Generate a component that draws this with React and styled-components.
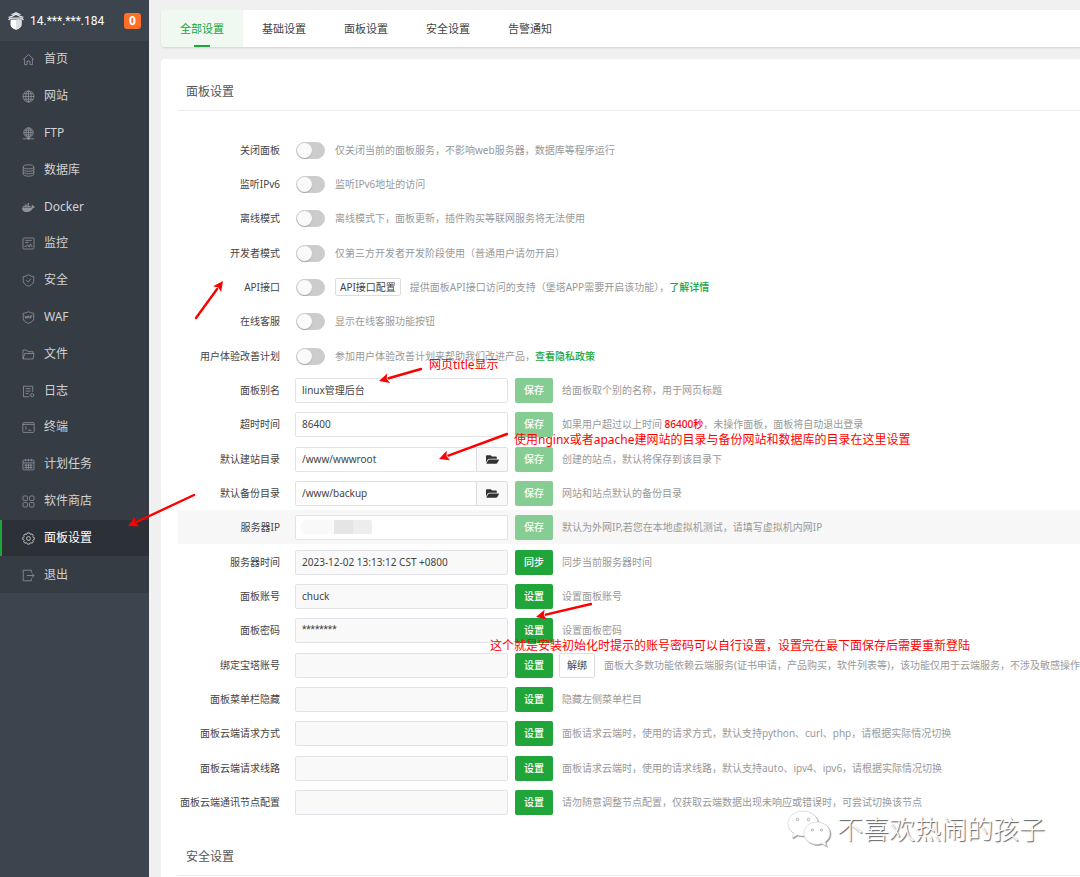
import React, { useState } from "react";
import styled, { createGlobalStyle, css } from "styled-components";
import { FaDocker, FaFolderOpen } from "react-icons/fa";

const ICONS = {
  home: <path d="M1.5 8 8 1.8 14.5 8M3.2 7v7.3h3V10h3.6v4.300h3V7" />,
  site: (
    <>
      <circle cx="8" cy="8" r="6.8" />
      <path d="M8 1.2v13.6M1.2 8h13.6M2.3 4.6h11.4M2.3 11.4h11.4" />
      <ellipse cx="8" cy="8" rx="3.4" ry="6.8" />
    </>
  ),
  ftp: (
    <>
      <circle cx="8" cy="6.8" r="5.8" />
      <path d="M8 1v13M2.2 6.8h11.6M3.2 4h9.6M3.2 9.6h9.6M1 14.5h14" />
      <ellipse cx="8" cy="6.8" rx="2.9" ry="5.8" />
      <circle cx="8" cy="14" r="1.2" fill="currentColor" />
    </>
  ),
  database: (
    <>
      <ellipse cx="8" cy="3.5" rx="6.5" ry="2.5" />
      <path d="M1.5 3.5v9c0 1.4 2.9 2.5 6.500 2.500s6.500-1.100 6.500-2.500v-9M1.500 6.500C1.500 7.900 4.400 9 8 9s6.500-1.100 6.500-2.500M1.500 9.500C1.500 10.900 4.400 12 8 12s6.500-1.100 6.500-2.500" />
    </>
  ),
  monitor: (
    <>
      <rect x="1.2" y="1.2" width="13.6" height="13.6" rx="1" />
      <path d="M4 4.200h8M4 6.800h4M3 11.500h2.500l1.500-2 2 3 1.500-4 1 3H13" />
    </>
  ),
  shield: (
    <>
      <path d="M8 1c2 1.300 4.200 2 6.500 2.200V8c0 3.400-2.600 5.700-6.500 7.200C4.100 13.700 1.500 11.400 1.500 8V3.200C3.800 3 6 2.300 8 1Z" />
      <path d="m5.200 7.800 2.100 2.100 3.600-3.700" />
    </>
  ),
  waf: (
    <>
      <path d="M8 .9c2 1.300 4.200 1.500 6.500 1.800V9c0 3-2.600 4.900-6.500 6.200C4.100 13.900 1.500 12 1.500 9V2.700C3.800 2.400 6 2.200 8 .9Z" />
      <path d="m3.500 5.800.9 3.200.9-2.200.9 2.200.9-3.200M7.300 9l1-3 1 3M10.500 9V5.900H13M10.500 7.400h2" />
    </>
  ),
  folder: (
    <>
      <path d="M1.200 13.500V2.500h4.600l1.500 2h6.200v2.300" />
      <path d="M1.200 13.500 3.300 6.800h11.500l-1.200 6.700H1.200Z" />
    </>
  ),
  log: (
    <>
      <path d="M9 14.500H1.800V1.500h11.400v7M4.500 4.500h6M4.500 7.500h6M4.500 10.500h3.500" />
      <circle cx="12.5" cy="12.5" r="2" />
    </>
  ),
  terminal: (
    <>
      <rect x="1" y="2" width="14" height="12" rx="1" />
      <path d="M1 4.200h14M3.500 6.800l2.300 2-2.300 2M7.500 11.300h4" />
    </>
  ),
  calendar: (
    <>
      <rect x="1.2" y="2.6" width="13.6" height="12" rx="1" />
      <path d="M4.500 1v3M8 1v3M11.500 1v3M1.200 6h13.600M3 8.800h10M3 11.600h10M5 7v6.500M8 7v6.500M11 7v6.500" />
    </>
  ),
  apps: (
    <>
      <rect x="1.2" y="1.2" width="5.6" height="5.6" rx="1.5" />
      <rect x="9.2" y="1.2" width="5.6" height="5.6" rx="1.5" />
      <rect x="1.2" y="9.2" width="5.6" height="5.6" rx="1.5" />
      <rect x="9.2" y="9.2" width="5.6" height="5.6" rx="1.5" />
    </>
  ),
  settings: (
    <>
      <path d="m6.300 2.400.6-1.400h2.200l.6 1.400 1.300.5 1.400-.6 1.500 1.600-.6 1.400.5 1.200 1.400.5v2l-1.400.6-.5 1.300.6 1.400-1.600 1.500-1.300-.6-1.300.5L9.100 15H6.900l-.6-1.300-1.300-.5-1.400.6-1.500-1.600.6-1.300-.5-1.300L.8 9V7l1.400-.5.5-1.200-.6-1.400 1.600-1.600 1.300.6Z" />
      <circle cx="8" cy="8" r="2.4" />
    </>
  ),
  logout: (
    <path d="M11.500 4.500v-3h-10v13h10v-3M6 8h9M12.200 5.300 15 8l-2.800 2.700" />
  )
};

const MENU = [
  { icon: "home", text: "首页" },
  { icon: "site", text: "网站" },
  { icon: "ftp", text: "FTP" },
  { icon: "database", text: "数据库" },
  { icon: "docker", text: "Docker" },
  { icon: "monitor", text: "监控" },
  { icon: "shield", text: "安全" },
  { icon: "waf", text: "WAF" },
  { icon: "folder", text: "文件" },
  { icon: "log", text: "日志" },
  { icon: "terminal", text: "终端" },
  { icon: "calendar", text: "计划任务" },
  { icon: "apps", text: "软件商店" },
  { icon: "settings", text: "面板设置" },
  { icon: "logout", text: "退出" }
];

const TABS = ["全部设置", "基础设置", "面板设置", "安全设置", "告警通知"];

const SWITCHES = [
  {
    id: "closePanel",
    label: "关闭面板",
    hint: "仅关闭当前的面板服务，不影响web服务器，数据库等程序运行"
  },
  { id: "ipv6", label: "监听IPv6", hint: "监听IPv6地址的访问" },
  {
    id: "offline",
    label: "离线模式",
    hint: "离线模式下，面板更新，插件购买等联网服务将无法使用"
  },
  {
    id: "developer",
    label: "开发者模式",
    hint: "仅第三方开发者开发阶段使用（普通用户请勿开启）"
  },
  {
    id: "api",
    label: "API接口",
    button: "API接口配置",
    hint: "提供面板API接口访问的支持（堡塔APP需要开启该功能），",
    link: "了解详情"
  },
  { id: "service", label: "在线客服", hint: "显示在线客服功能按钮" },
  {
    id: "improve",
    label: "用户体验改善计划",
    hint: "参加用户体验改善计划来帮助我们改进产品，",
    link: "查看隐私政策"
  }
];

const FIELDS = [
  {
    id: "alias",
    label: "面板别名",
    value: "linux管理后台",
    action: "保存",
    hint: "给面板取个别的名称，用于网页标题"
  },
  {
    id: "timeout",
    label: "超时时间",
    value: "86400",
    action: "保存",
    hint: "如果用户超过以上时间 ",
    warn: "86400秒",
    hintEnd: "，未操作面板，面板将自动退出登录"
  },
  {
    id: "sitePath",
    label: "默认建站目录",
    value: "/www/wwwroot",
    action: "保存",
    browse: true,
    hint: "创建的站点，默认将保存到该目录下"
  },
  {
    id: "backupPath",
    label: "默认备份目录",
    value: "/www/backup",
    action: "保存",
    browse: true,
    hint: "网站和站点默认的备份目录"
  },
  {
    id: "serverIp",
    label: "服务器IP",
    value: "",
    action: "保存",
    masked: true,
    active: true,
    hint: "默认为外网IP,若您在本地虚拟机测试，请填写虚拟机内网IP"
  },
  {
    id: "serverTime",
    label: "服务器时间",
    value: "2023-12-02 13:13:12 CST +0800",
    action: "同步",
    hint: "同步当前服务器时间"
  },
  {
    id: "account",
    label: "面板账号",
    value: "chuck",
    action: "设置",
    hint: "设置面板账号"
  },
  {
    id: "password",
    label: "面板密码",
    value: "********",
    action: "设置",
    hint: "设置面板密码"
  },
  {
    id: "btAccount",
    label: "绑定宝塔账号",
    value: "",
    action: "设置",
    extra: "解绑",
    hint:
      "面板大多数功能依赖云端服务(证书申请，产品购买，软件列表等)，该功能仅用于云端服务，不涉及敏感操作"
  },
  {
    id: "hideMenu",
    label: "面板菜单栏隐藏",
    value: "",
    action: "设置",
    hint: "隐藏左侧菜单栏目"
  },
  {
    id: "cloudMethod",
    label: "面板云端请求方式",
    value: "",
    action: "设置",
    hint:
      "面板请求云端时，使用的请求方式，默认支持python、curl、php，请根据实际情况切换"
  },
  {
    id: "cloudLine",
    label: "面板云端请求线路",
    value: "",
    action: "设置",
    hint:
      "面板请求云端时，使用的请求线路，默认支持auto、ipv4、ipv6，请根据实际情况切换"
  },
  {
    id: "cloudNode",
    label: "面板云端通讯节点配置",
    value: "",
    action: "设置",
    hint:
      "请勿随意调整节点配置，仅获取云端数据出现未响应或错误时，可尝试切换该节点"
  }
];

const ARROWS = [
  [196, 318, 223, 281],
  [194, 495, 128, 526],
  [421, 369, 379, 381],
  [507, 434, 439, 459],
  [591, 604, 536, 617]
];

const NOTES = [
  { x: 429, y: 357, text: "网页title显示" },
  {
    x: 514,
    y: 432,
    text: "使用nginx或者apache建网站的目录与备份网站和数据库的目录在这里设置"
  },
  {
    x: 490,
    y: 638,
    text:
      "这个就是安装初始化时提示的账号密码可以自行设置，设置完在最下面保存后需要重新登陆"
  }
];

function MenuIcon({ name }) {
  if (name === "docker") return <FaDocker size={13} />;
  return (
    <svg width="13" height="13" viewBox="0 0 16 16" fill="none" stroke="currentColor">
      {ICONS[name]}
    </svg>
  );
}

function Logo() {
  return (
    <svg width="16" height="18" viewBox="0 0 16 18" fill="none">
      <path d="M2.500 7.500h11V13c0 2-2.500 3.800-5.500 4.800C5 16.800 2.500 15 2.500 13Z" fill="#fff" />
      <path d="M8 7.500h5.500V13c0 2-2.500 3.800-5.500 4.800Z" fill="#dcdee0" />
      <path
        d="M.8 8.200c.2-1.600 1.400-2 3.200-2h8c1.800 0 3 .4 3.200 2M.6 5.300C2.800 5 5.800 3.700 8 2.300c2.200 1.400 5.200 2.700 7.400 3M3.500 2.600C5.200 2.400 6.800 1.700 8 .8c1.200.9 2.800 1.600 4.500 1.800"
        stroke="#e6e8ea"
        strokeWidth="1.3"
      />
    </svg>
  );
}

function Arrow({ points: [x1, y1, x2, y2] }) {
  const len = Math.hypot(x2 - x1, y2 - y1);
  const ux = (x2 - x1) / len;
  const uy = (y2 - y1) / len;
  const bx = x2 - ux * 10;
  const by = y2 - uy * 10;
  const corners = [
    [x2, y2],
    [bx - uy * 5, by + ux * 5],
    [x2 - ux * 8, y2 - uy * 8],
    [bx + uy * 5, by - ux * 5]
  ];
  return (
    <g>
      <line x1={x1} y1={y1} x2={bx} y2={by} stroke="#f00" strokeWidth="2.4" strokeLinecap="round" />
      <polygon points={corners.map(c => c.join(",")).join(" ")} fill="#f00" />
    </g>
  );
}

function SwitchRow({ item }) {
  const [on, setOn] = useState(false);
  return (
    <Row>
      <Label htmlFor={item.id}>{item.label}</Label>
      <Switch
        id={item.id}
        type="checkbox"
        checked={on}
        onChange={e => setOn(e.target.checked)}
      />
      {item.button && <SmallButton type="button">{item.button}</SmallButton>}
      <Hint>
        {item.hint}
        {item.link && <HintLink href="#">{item.link}</HintLink>}
      </Hint>
    </Row>
  );
}

function FieldRow({ item }) {
  const [value, setValue] = useState(item.value);
  const readOnly = item.action !== "保存";
  return (
    <Row $active={item.active}>
      <Label htmlFor={item.id}>{item.label}</Label>
      <Field>
        <Input
          id={item.id}
          type="text"
          value={value}
          readOnly={readOnly}
          $asterisks={item.id === "password"}
          onChange={e => setValue(e.target.value)}
        />
        {item.browse && (
          <Browse type="button" aria-label={item.label}>
            <FaFolderOpen size={13} />
          </Browse>
        )}
        {item.masked && <Mask />}
      </Field>
      <Action type="button" $faded={!readOnly}>
        {item.action}
      </Action>
      {item.extra && <PlainButton type="button">{item.extra}</PlainButton>}
      <Hint>
        {item.hint}
        {item.warn && <Warn>{item.warn}</Warn>}
        {item.hintEnd}
      </Hint>
    </Row>
  );
}

export default function App() {
  const [tab, setTab] = useState(TABS[0]);

  return (
    <Layout>
      <GlobalStyle />
      <Sidebar>
        <Server>
          <Logo />
          <ServerName>14.***.***.184</ServerName>
          <Badge>0</Badge>
        </Server>
        <Menu>
          {MENU.map(item => (
            <MenuItem key={item.text} href="#" $active={item.icon === "settings"}>
              <MenuIcon name={item.icon} />
              <span>{item.text}</span>
            </MenuItem>
          ))}
        </Menu>
      </Sidebar>

      <Main>
        <Tabs>
          {TABS.map(name => (
            <Tab key={name} type="button" $active={name === tab} onClick={() => setTab(name)}>
              {name}
            </Tab>
          ))}
        </Tabs>
        <Panel>
          <Title>面板设置</Title>
          <Rows>
            {SWITCHES.map(item => (
              <SwitchRow key={item.id} item={item} />
            ))}
            {FIELDS.map(item => (
              <FieldRow key={item.id} item={item} />
            ))}
          </Rows>
          <Title>安全设置</Title>
        </Panel>
      </Main>

      <Overlay>
        <Drawing>
          {ARROWS.map(points => (
            <Arrow key={points.join()} points={points} />
          ))}
        </Drawing>
        {NOTES.map(note => (
          <Note key={note.text} $x={note.x} $y={note.y}>
            {note.text}
          </Note>
        ))}
        <Watermark>
          <svg width="44" height="38" viewBox="0 0 44 38" fill="#fff" stroke="#ccc" strokeWidth=".6">
            <path d="M16 1C7.700 1 1 6.600 1 13.500c0 3.900 2.100 7.300 5.500 9.600L5 28l5.300-2.900c1.800.6 3.700.9 5.700.9 8.300 0 15-5.600 15-12.500S24.300 1 16 1Z" />
            <path d="M30 12c-7.200 0-13 5-13 11.200s5.800 11.200 13 11.200c1.700 0 3.400-.3 4.900-.8l4.600 2.700-1.300-4.400c2.900-2 4.800-5.200 4.800-8.700C43 17 37.200 12 30 12Z" />
            <g stroke="#888">
              <circle cx="10.5" cy="9.5" r="1.3" />
              <circle cx="21.5" cy="9.5" r="1.3" />
              <circle cx="25.5" cy="20" r="1.1" />
              <circle cx="34.5" cy="20" r="1.1" />
            </g>
          </svg>
          <span>不喜欢热闹的孩子</span>
        </Watermark>
      </Overlay>
    </Layout>
  );
}

const GlobalStyle = createGlobalStyle`
  * {
    box-sizing: border-box;
  }
  body {
    margin: 0;
    background: #f0f0f0;
    color: #555;
    font-family: "Noto Sans", "Noto Sans CJK SC", sans-serif;
    font-size: 10px;
    line-height: 16px;
  }
  button, input {
    margin: 0;
    font: inherit;
  }
  a {
    text-decoration: none;
  }
`;

const Layout = styled.div`
  position: relative;
  display: flex;
  min-height: 100vh;
  overflow: hidden;
`;
const Sidebar = styled.aside`
  flex: 0 0 149px;
  background: #3c444d;
`;
const Server = styled.div`
  display: flex;
  align-items: center;
  gap: 6px;
  height: 41px;
  padding: 0 8px;
  color: #fff;
  font-size: 12px;
`;
const ServerName = styled.span`
  flex: 1;
  font-family: Roboto, "Noto Sans", sans-serif;
`;
const Badge = styled.span`
  width: 17px;
  border-radius: 3px;
  background: #ff6f26;
  font-weight: 700;
  text-align: center;
`;
const Menu = styled.nav`
  background: #353c43;
`;
const MenuItem = styled.a`
  display: flex;
  align-items: center;
  gap: 9px;
  height: 36px;
  margin-bottom: 1px;
  padding-left: 20px;
  border-left: 2px solid transparent;
  color: #d0d2d4;
  font-size: 12px;

  &:nth-child(5n) {
    margin-bottom: 0;
  }

  svg {
    color: #8f9499;
  }

  ${props =>
    props.$active &&
    css`
      border-color: #20a53a;
      background: #2c3138;
      color: #fff;

      svg {
        color: #d6d8da;
      }
    `}
`;
const Main = styled.main`
  flex: 1;
  display: flex;
  flex-direction: column;
  gap: 12px;
  min-width: 0;
  padding: 10px 0 0 12px;
`;
const Tabs = styled.div`
  display: flex;
  height: 37px;
  border-radius: 4px 0 0 4px;
  background: #fff;
  box-shadow: 0 1px 2px rgba(0, 0, 0, 0.12);
`;
const Tab = styled.button`
  position: relative;
  width: 82px;
  padding: 0;
  border: 0;
  border-radius: 4px 0 0 4px;
  background: ${props => (props.$active ? "#eff8f1" : "none")};
  color: ${props => (props.$active ? "#20a53a" : "#444")};
  font-size: 11px;

  &::after {
    content: "";
    display: ${props => (props.$active ? "block" : "none")};
    position: absolute;
    bottom: 0;
    left: 33px;
    width: 16px;
    height: 2px;
    background: #20a53a;
  }
`;
const Panel = styled.section`
  flex: 1;
  padding-left: 17px;
  border-radius: 4px 0 0 0;
  background: #fff;
`;
const Title = styled.h2`
  margin: 0;
  padding: 25px 8px 10px;
  border-bottom: 1px solid #ececec;
  color: #555;
  font-size: 12px;
  font-weight: 400;
  line-height: 16px;
`;
const Rows = styled.div`
  margin: 22px 0 5px;
`;
const Row = styled.div`
  display: flex;
  align-items: center;
  height: 34px;
  background: ${props => (props.$active ? "#f7f7f7" : "none")};
  white-space: nowrap;

  &:nth-child(3n) {
    margin-bottom: 1px;
  }
`;
const Label = styled.label`
  flex: none;
  width: 102px;
  margin-right: 15px;
  color: #444;
  text-align: right;
`;
const Switch = styled.input`
  appearance: none;
  flex: none;
  width: 29px;
  height: 17px;
  margin: 0 1px;
  border: 1px solid #ccc;
  border-radius: 9px;
  background: ${props => (props.checked ? "#20a53a" : "#ccc")};

  &::before {
    content: "";
    display: block;
    width: 15px;
    height: 15px;
    margin-left: ${props => (props.checked ? "12px" : "0")};
    border-radius: 50%;
    background: #fafafa;
    box-shadow: 0 1px 1px rgba(0, 0, 0, 0.2);
  }
`;
const Field = styled.div`
  position: relative;
  display: flex;
  flex: none;
  width: 213px;
  height: 25px;
`;
const Input = styled.input`
  flex: 1;
  min-width: 0;
  padding: 0 6px;
  border: 1px solid #e2e2e8;
  border-radius: 2px;
  outline: 0;
  background: ${props => (props.readOnly ? "#f9f9f9" : "#fff")};
  color: #444;
  ${props => props.$asterisks && `font-family: Roboto, "Noto Sans", sans-serif;`}
`;
const Browse = styled.button`
  display: flex;
  align-items: center;
  justify-content: center;
  width: 32px;
  margin-left: -1px;
  padding: 0;
  border: 1px solid #dedee2;
  border-radius: 0 2px 2px 0;
  background: #f9f9f9;
  color: #333;
`;
const Mask = styled.span`
  position: absolute;
  top: 5px;
  left: 5px;
  width: 72px;
  height: 14px;
  border-radius: 7px 2px 2px 7px;
  background: linear-gradient(
    to right,
    #f9f9f9 34px,
    #e5e5e5 34px 53px,
    #ededed 53px
  );
`;
const Action = styled.button`
  flex: none;
  width: 38px;
  height: 25px;
  margin-left: 7px;
  padding: 0;
  border: 0;
  border-radius: 2px;
  background: ${props => (props.$faded ? "#86cd93" : "#20a53a")};
  color: #fff;
  font-weight: 500;
`;
const PlainButton = styled.button`
  flex: none;
  width: 36px;
  height: 25px;
  margin-left: 6px;
  padding: 0;
  border: 1px solid #ddd;
  border-radius: 2px;
  background: #fff;
  color: #444;
`;
const SmallButton = styled.button`
  height: 18px;
  margin-left: 9px;
  padding: 0 4px;
  border: 1px solid #ddd;
  border-radius: 2px;
  background: #fff;
  color: #444;
`;
const Hint = styled.span`
  margin-left: 9px;
  color: #999;
`;
const HintLink = styled.a`
  color: #20a53a;
  font-weight: 500;
`;
const Warn = styled.b`
  color: #f00;
  font-weight: 500;
`;
const Overlay = styled.div`
  position: absolute;
  inset: 0;
  pointer-events: none;
`;
const Drawing = styled.svg`
  display: block;
  width: 100%;
  height: 100%;
`;
const Note = styled.span`
  position: absolute;
  top: ${props => props.$y}px;
  left: ${props => props.$x}px;
  color: #f00;
  font-size: 12px;
  white-space: nowrap;
`;
const Watermark = styled.div`
  position: absolute;
  right: 35px;
  bottom: 28px;
  display: flex;
  align-items: center;
  gap: 6px;
  color: #fff;
  font-size: 26px;
  font-weight: 300;
  line-height: 40px;
  text-shadow: 1px 1px 1px #555;

  svg {
    filter: drop-shadow(1px 1px 0 #999);
  }
`;
